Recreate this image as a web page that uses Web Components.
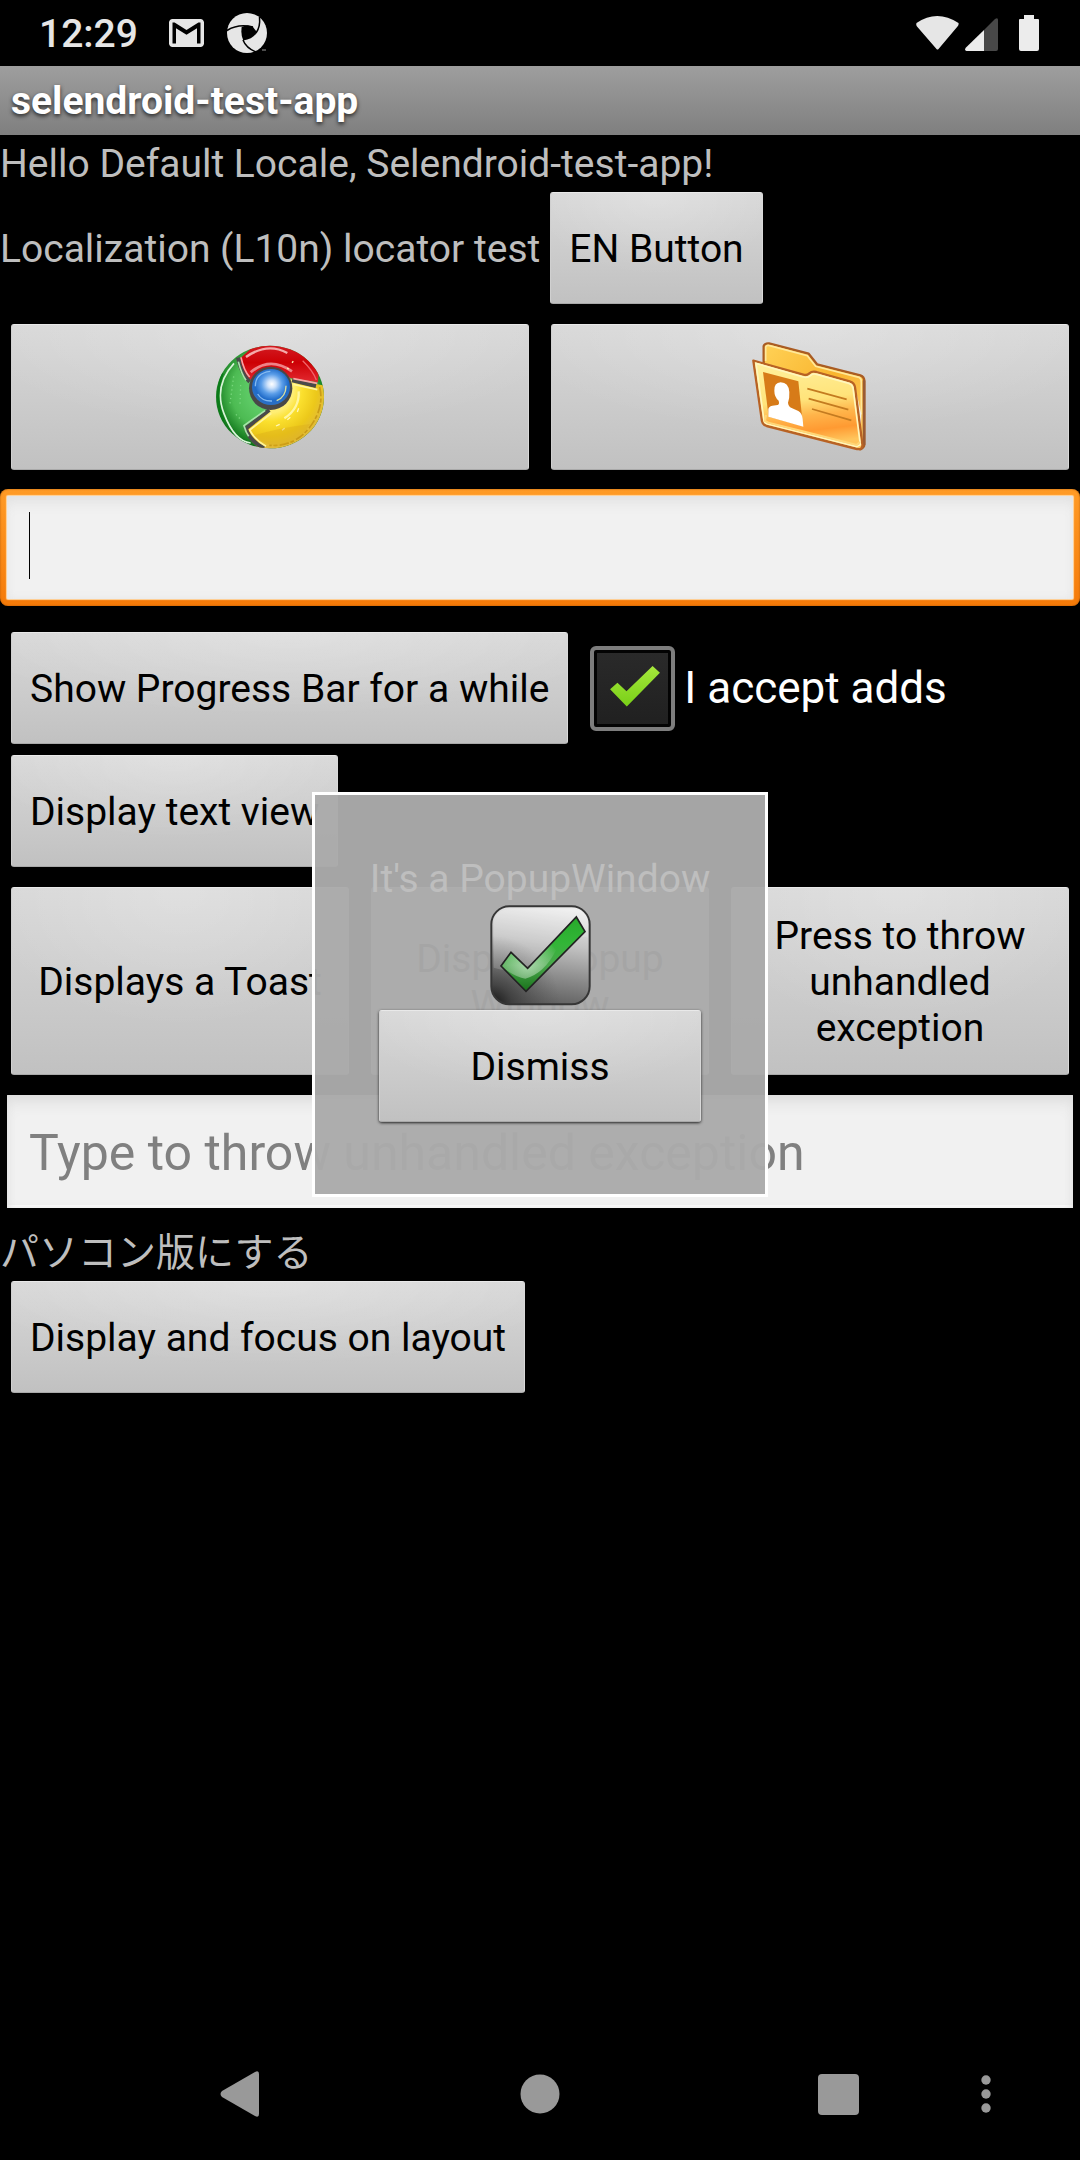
<!DOCTYPE html>
<html lang="en">
<head>
<meta charset="utf-8">
<meta name="viewport" content="width=device-width, initial-scale=1">
<title>selendroid-test-app</title>
<style>
  body { margin: 0; background: #000; font-family: Roboto, "Noto Sans CJK JP", sans-serif; font-size: 39px; line-height: 46px; }
</style>
</head>
<body>
<test-app></test-app>
<script>
const define = (name, html) => customElements.define(name, class extends HTMLElement {
  constructor() {
    super();
    this.attachShadow({ mode: 'open' }).innerHTML = html;
  }
});

define('status-bar', `
<style>
  :host { display: flex; align-items: center; height: 66px; padding: 0 41px 0 39px; color: #e6e6e6; font-weight: 500; box-sizing: border-box; }
  time { padding-top: 2px; }
  .mail { margin-left: 31px; }
  .shutter { margin-left: 23px; }
  .space { flex: 1; }
  .signal { margin: 2px 21px 0 6px; }
  svg { display: block; flex: none; }
</style>
<time>12:29</time>
<svg class="mail" width="35" height="28" viewBox="2 4 20 16"><path fill="#e6e6e6" d="M20 4H4c-1.100 0-2 .9-2 2v12c0 1.100.9 2 2 2h16c1.100 0 2-.9 2-2V6c0-1.100-.9-2-2-2zm0 14h-2V9.250L12 13 6 9.250V18H4V6h1.200l6.800 4.250L18.800 6H20v12z"/></svg>
<svg class="shutter" width="40" height="40" viewBox="0 0 40 40"><circle cx="20" cy="20" r="20" fill="#e6e6e6"/><path d="M14.700 14Q20 11 26 14L30 19.300Q26 26 16.300 27.500Q13.500 22 14.700 14Z" fill="#000"/><g fill="none" stroke="#000" stroke-width="1.500"><path d="M0 17.500Q11 10.500 26 14"/><path d="M32.500 4Q33.500 14 29 20"/><path d="M16 27Q19 35 29 39"/></g><path d="M40 32V40H27Q34 38 37 33Z" fill="#000"/><path d="M35 37h4" stroke="#999"/></svg>
<span class="space"></span>
<svg width="43" height="34" viewBox="0 0 43 34"><path d="M0.500 7Q21 -7 42.500 7Q43 9 41.500 10.500L22.500 33Q21.500 34 20.500 33L1 10.500Q-.2 9 .5 7Z" fill="#e6e6e6"/></svg>
<svg class="signal" width="33" height="33" viewBox="0 0 33 33"><path d="M19 12 30 1Q33-1 33 2V31Q33 33 31 33H19Z" fill="#484848"/><path d="M19 12V33H1.500Q-1 32 1 29.500Z" fill="#ececec"/></svg>
<svg width="20" height="36" viewBox="0 0 20 36"><path d="M5 0H15V4H19Q20 4 20 5V34Q20 36 18 36H2Q0 36 0 34V5Q0 4 1 4H5Z" fill="#ececec"/></svg>
`);

define('title-bar', `
<style>
  :host { display: flex; align-items: center; height: 69px; padding: 0 11px; background: linear-gradient(#9e9e9e, #7f7f7f); color: #fff; }
  h1 { margin: 0; font-size: inherit; font-weight: 700; text-shadow: 0 2px 4px rgba(0,0,0,.75); }
</style>
<h1><slot></slot></h1>
`);

define('app-text', `
<style>:host { display: block; padding-top: 2px; line-height: 55px; color: #bebebe; white-space: nowrap; }</style>
<slot></slot>
`);

define('app-button', `
<style>
  :host { display: flex; min-height: 112px; }
  button { flex: 1; margin: 0; padding: 2px 18px 0; border: 1px solid; border-color: #e9e9e9 #d9d9d9 #a9a9a9 #d0d0d0; border-radius: 3px;
    background: radial-gradient(ellipse 60% 75% at 50% 0, rgba(255,255,255,.22), rgba(255,255,255,0)), linear-gradient(#d8d8d8, #c1c1c1);
    box-shadow: 0 1px 3px rgba(0,0,0,.8); color: #000; font: inherit; text-align: center; white-space: pre-line; }
</style>
<button type="button"><slot></slot></button>
`);

customElements.define('app-input', class extends HTMLElement {
  constructor() {
    super();
    this.attachShadow({ mode: 'open' }).innerHTML = `
<style>
  :host { display: flex; margin: 0 7px; }
  input { flex: 1; min-width: 0; height: 113px; box-sizing: border-box; margin: 0; padding: 2px 22px 0; border: 0; border-radius: 1px;
    background: #f1f1f1; box-shadow: inset 0 12px 16px -6px #dcdcdc, inset 0 0 9px #e2e2e2, inset 0 -3px #fff;
    color: #000; font: inherit; font-size: 50px; outline: 0; caret-color: transparent; }
  input::placeholder { color: #808080; opacity: 1; }
  :host([active]) { margin: 0; padding: 7px; border-radius: 8px; background: linear-gradient(#ff9b26, #f57a08); box-shadow: inset 0 0 2px #a85608; }
  :host([active]) input { height: 103px; background: linear-gradient(#000, #000) 22px 16px / 1px 67px no-repeat #f1f1f1; box-shadow: inset 0 12px 14px -6px #e2e2e2, inset 0 0 9px #e6e6e6, 0 0 1px 1px #ffd7a5; }
</style>
<input type="text">`;
    const input = this.shadowRoot.querySelector('input');
    input.placeholder = this.getAttribute('placeholder') || '';
    input.setAttribute('aria-label', this.getAttribute('label') || input.placeholder);
  }
});

define('app-checkbox', `
<style>
  :host { display: block; color: #fff; font-size: 44px; }
  label { display: flex; align-items: center; gap: 9px; }
  .box { display: grid; }
  input, svg { grid-area: 1 / 1; width: 85px; height: 85px; margin: 0; }
  input { appearance: none; box-sizing: border-box; border: 4px solid #7d7d7d; border-radius: 6px; background: linear-gradient(#2a2a2a, #202020); box-shadow: inset 0 0 0 3px #030303; }
  svg { pointer-events: none; visibility: hidden; }
  input:checked + svg { visibility: visible; }
</style>
<label>
  <span class="box"><input type="checkbox" checked>
  <svg viewBox="91 103 254 254"><defs><linearGradient id="g" x1="0" y1="0" x2="0" y2="1"><stop stop-color="#a6e83c"/><stop offset="1" stop-color="#78cf17"/></linearGradient></defs><path d="M151 232 173 213 200 238 278 163 300 183 201 284Z" fill="url(#g)"/></svg></span>
  <slot></slot>
</label>
`);

define('browser-icon', `
<style>:host { display: block; white-space: normal; } svg { display: block; margin: auto; }</style>
<svg width="112" height="112" viewBox="100 93 336 336">
  <defs>
    <clipPath id="c"><ellipse cx="268" cy="258" rx="162" ry="154"/></clipPath>
    <radialGradient id="b" cx=".52" cy=".42" r=".55"><stop stop-color="#fff"/><stop offset=".2" stop-color="#cfe3fb"/><stop offset=".5" stop-color="#5a9de8"/><stop offset=".8" stop-color="#1f6bc9"/><stop offset="1" stop-color="#2a6fc4"/></radialGradient>
    <radialGradient id="gr" gradientUnits="userSpaceOnUse" cx="268" cy="240" r="170"><stop offset=".4" stop-color="#5cc964"/><stop offset=".68" stop-color="#4dbb53"/><stop offset="1" stop-color="#0d7318"/></radialGradient>
    <radialGradient id="y" gradientUnits="userSpaceOnUse" cx="268" cy="235" r="175"><stop offset=".4" stop-color="#ffee74"/><stop offset=".55" stop-color="#fbe02e"/><stop offset=".8" stop-color="#ecc81a"/><stop offset="1" stop-color="#e0b93a"/></radialGradient>
    <linearGradient id="r" x1="0" y1="0" x2="0" y2="1"><stop stop-color="#d32027"/><stop offset=".5" stop-color="#cd0005"/><stop offset="1" stop-color="#e22930"/></linearGradient>
  </defs>
  <g clip-path="url(#c)">
    <rect x="100" y="93" width="336" height="336" fill="url(#gr)"/>
    <path d="M330 205 440 225V430H275Q215 410 192 358L262 297Z" fill="url(#y)"/>
    <path d="M170 150 230 95H420L412 214 330 202 268 168 204 210Z" fill="url(#r)"/>
    <path d="M172 140Q182 190 207 212M334 208 406 225M266 297 196 352Q205 388 250 412" fill="none" stroke="#4a4a4a" stroke-width="12"/>
    <path d="M181 139Q190 180 207 198M338 203 410 217" fill="none" stroke="#f7a6a6" stroke-width="5"/>
    <path d="M338 220 410 236M272 307 207 357Q222 386 256 406" fill="none" stroke="#fff59c" stroke-width="5"/>
    <path d="M173 152Q182 188 196 208M253 299 190 344Q196 365 204 376" fill="none" stroke="#a8e3aa" stroke-width="5"/>
    <path d="M160 157Q98 224 130 308T210 396" fill="none" stroke="#d9f4d9" stroke-width="5"/>
    <path d="M126 187Q97 260 129 330" fill="none" stroke="#0a7a18" stroke-width="7"/>
    <path d="M196 138Q260 93 320 126" fill="none" stroke="#f5aaaa" stroke-width="7"/>
    <path d="M210 184Q267 135 334 181" fill="none" stroke="#ee8287" stroke-width="8"/>
    <path d="M366 149Q397 179 407 207" fill="none" stroke="#ef6469" stroke-width="4"/>
    <path d="M417 228Q432 292 386 350T266 403" fill="none" stroke="#c99b17" stroke-width="5" stroke-dasharray="28 7 12 5"/>
    <path d="M354 241Q357 292 311 322" fill="none" stroke="#fff6a0" stroke-width="7"/>
    <path d="M286 345 297 340M320 326 329 319M350 303 354 292M304 358 312 352M334 155 338 151M320 171 324 175" stroke="#fff8bb" stroke-width="4"/>
    <path d="M220 373Q300 350 388 339Q358 393 286 407 236 393 220 373Z" fill="#d9ac19" opacity=".38"/>
    <path d="M159 196 148 278M166 310 183 329M180 222 178 280" stroke="#77d67c" stroke-width="4" stroke-dasharray="4 9"/>
  </g>
  <circle cx="270" cy="232" r="65" fill="#484848"/>
  <ellipse cx="271" cy="228" rx="57" ry="54" fill="url(#b)"/>
  <path d="M224 226Q224 186 269 181M231 249Q244 271 274 270" fill="none" stroke="#85baf0" stroke-width="4"/>
  <path d="M316 224Q316 257 288 269" fill="none" stroke="#d9dda0" stroke-width="4"/>
</svg>
`);

define('contacts-icon', `
<style>:host { display: block; white-space: normal; } svg { display: block; margin: auto; }</style>
<svg width="118" height="114" viewBox="93 90 354 342">
  <defs>
    <linearGradient id="f" x1="0" y1="0" x2=".15" y2="1"><stop stop-color="#fff2a0"/><stop offset=".5" stop-color="#ffe37a"/><stop offset=".68" stop-color="#ffb44a"/><stop offset=".85" stop-color="#ff9a32"/><stop offset="1" stop-color="#ffc55c"/></linearGradient>
    <linearGradient id="k" x1="0" y1="0" x2="1" y2="1"><stop stop-color="#ffd257"/><stop offset=".5" stop-color="#f9b52f"/><stop offset="1" stop-color="#ffce6a"/></linearGradient>
  </defs>
  <path d="M131 105Q134 96 147 97L266 128 291 160 421 193Q433 197 433 211V400Q433 410 421 415L390 400 131 300Z" fill="url(#k)" stroke="#aa5c22" stroke-width="7" stroke-linejoin="round"/>
  <path d="M137 150V108Q140 101 149 104L262 134 287 166 417 199Q425 203 424 215V310" fill="none" stroke="#ffe89a" stroke-width="5"/>
  <path d="M432 208V402" stroke="#9b5b32" stroke-width="8"/>
  <path d="M404 222 424 310 421 398Z" fill="#f3f0e6"/>
  <path d="M100 149 250 191Q261 194 268 187 276 180 289 183L389 211Q403 215 405 229L427 399Q429 417 411 414L140 345Q128 341 126 331Z" fill="url(#f)" stroke="#b86224" stroke-width="7" stroke-linejoin="round"/>
  <path d="M108 157 250 198Q263 202 272 193 279 187 290 190L387 217Q397 220 399 231L421 401 410 407 142 339Q133 336 132 329Z" fill="none" stroke="#fff6bd" stroke-width="5"/>
  <path d="M138 312 135 330 145 335 245 360 410 402 420 393" fill="none" stroke="#ffd778" stroke-width="6"/>
  <path d="M129 183 235 211 249 346 146 317Z" fill="#d77b18"/>
  <path d="M145 317V295Q145 287 157 284L173 282Q179 280 176 269 163 258 163 239 162 215 182 214 206 215 208 243 209 262 204 275 205 286 215 291L235 300Q246 307 248 323L250 347Z" fill="#fff"/>
  <path d="M262 233 380 265M266 263 385 296M276 294 394 328" stroke="#c47b20" stroke-width="5"/>
</svg>
`);

define('done-icon', `
<style>:host, svg { display: block; }</style>
<svg width="101" height="101" viewBox="567 374 303 303">
  <defs>
    <linearGradient id="m" x1=".55" y1="0" x2=".4" y2="1"><stop stop-color="#ededed"/><stop offset=".35" stop-color="#c4c4c4"/><stop offset=".7" stop-color="#8a8a8a"/><stop offset="1" stop-color="#5c5c5c"/></linearGradient>
    <radialGradient id="d" cx="0" cy="1" r=".7"><stop stop-color="#111"/><stop offset=".3" stop-color="#333" stop-opacity=".7"/><stop offset="1" stop-color="#555" stop-opacity="0"/></radialGradient>
    <linearGradient id="t" x1="0" y1="0" x2="0" y2="1"><stop stop-color="#27a82b"/><stop offset=".35" stop-color="#32b637"/><stop offset=".65" stop-color="#4aa84c"/><stop offset="1" stop-color="#18711a"/></linearGradient>
    <radialGradient id="s" gradientUnits="userSpaceOnUse" cx="680" cy="555" r="100"><stop stop-color="#d9f1d9" stop-opacity=".65"/><stop offset="1" stop-color="#fff" stop-opacity="0"/></radialGradient>
  </defs>
  <rect x="571" y="378" width="295" height="294" rx="54" fill="url(#m)"/>
  <rect x="571" y="378" width="295" height="294" rx="54" fill="url(#d)"/>
  <path d="M578 562Q650 588 735 523T861 472V418Q857 386 812 386H626Q580 389 578 430Z" fill="#fff" opacity=".16"/>
  <rect x="571" y="378" width="295" height="294" rx="54" fill="none" stroke="#363636" stroke-width="6"/>
  <path d="M600 557 630 516 680 564 826 410 852 454 675 633Z" fill="url(#t)"/>
  <path d="M600 557 630 516 680 564 750 490 765 510Q730 580 673 595 640 590 600 557Z" fill="url(#s)"/>
  <path d="M600 557 630 516 680 564 826 410 852 454 675 633Z" fill="none" stroke="#222" stroke-width="5"/>
</svg>
`);

define('popup-window', `
<style>
  :host { display: flex; flex-direction: column; align-items: center; box-sizing: border-box; width: 456px; height: 405px; padding-top: 55px; border: 3px solid #fff; background: rgba(170,170,170,.97); }
  done-icon { margin-bottom: 4px; }
  app-text { height: 53px; }
  app-button { width: 322px; }
</style>
<app-text><slot></slot></app-text>
<done-icon></done-icon>
<app-button>Dismiss</app-button>
`);

define('nav-bar', `
<style>
  :host { display: grid; grid-template-columns: 140fr 200fr 100fr 200fr 98fr 200fr 96fr 46fr; height: 132px; }
  button { display: grid; place-items: center; padding: 0; border: 0; background: none; }
  .back { grid-column: 2; } .home { grid-column: 4; } .recent { grid-column: 6; } .more { grid-column: 7; }
  svg { fill: #999; }
</style>
<button class="back" type="button" aria-label="Back"><svg width="40" height="46" viewBox="0 0 40 46"><path d="M2 20 35 1Q39-1 39 3V43Q39 47 35 45L2 26Q-1 23 2 20Z"/></svg></button>
<button class="home" type="button" aria-label="Home"><svg width="40" height="40"><circle cx="20" cy="20" r="19.500"/></svg></button>
<button class="recent" type="button" aria-label="Overview"><svg width="41" height="41"><rect width="41" height="41" rx="4"/></svg></button>
<button class="more" type="button" aria-label="More"><svg width="10" height="38"><circle cx="5" cy="5" r="4.700"/><circle cx="5" cy="19" r="4.700"/><circle cx="5" cy="33" r="4.700"/></svg></button>
`);

define('test-app', `
<style>
  :host { display: flex; flex-direction: column; min-height: 100vh; position: relative; }
  main { flex: 1; display: flex; flex-direction: column; }
  .row { display: flex; align-items: center; }
  .locale { gap: 10px; }
  .inset { padding: 0 11px; }
  .even { gap: 22px; }
  .even > * { flex: 1 1 0; min-width: 0; }
  .icons { margin: 20px 0 19px; }
  .icons app-button { height: 146px; }
  .accept { margin: 26px 0 11px; gap: 22px; }
  .actions { margin: 20px 0; }
  .actions app-button { height: 188px; }
  .japanese { margin-top: 16px; }
  popup-window { position: absolute; top: 792px; left: 50%; transform: translateX(-50%); }
</style>
<status-bar></status-bar>
<title-bar>selendroid-test-app</title-bar>
<main>
  <app-text>Hello Default Locale, Selendroid-test-app!</app-text>
  <div class="row locale"><app-text>Localization (L10n) locator test</app-text><app-button>EN Button</app-button></div>
  <div class="row inset even icons"><app-button aria-label="Browser"><browser-icon></browser-icon></app-button><app-button aria-label="Contacts"><contacts-icon></contacts-icon></app-button></div>
  <app-input active label="Text"></app-input>
  <div class="row inset accept"><app-button>Show Progress Bar for a while</app-button><app-checkbox>I accept adds</app-checkbox></div>
  <div class="row inset"><app-button>Display text view</app-button></div>
  <div class="row inset even actions"><app-button>Displays a Toast</app-button><app-button>Display Popup
Window</app-button><app-button>Press to throw
unhandled
exception</app-button></div>
  <app-input placeholder="Type to throw unhandled exception"></app-input>
  <app-text class="japanese" lang="ja">パソコン版にする</app-text>
  <div class="row inset"><app-button>Display and focus on layout</app-button></div>
</main>
<popup-window>It's a PopupWindow</popup-window>
<nav-bar></nav-bar>
`);
</script>
</body>
</html>
